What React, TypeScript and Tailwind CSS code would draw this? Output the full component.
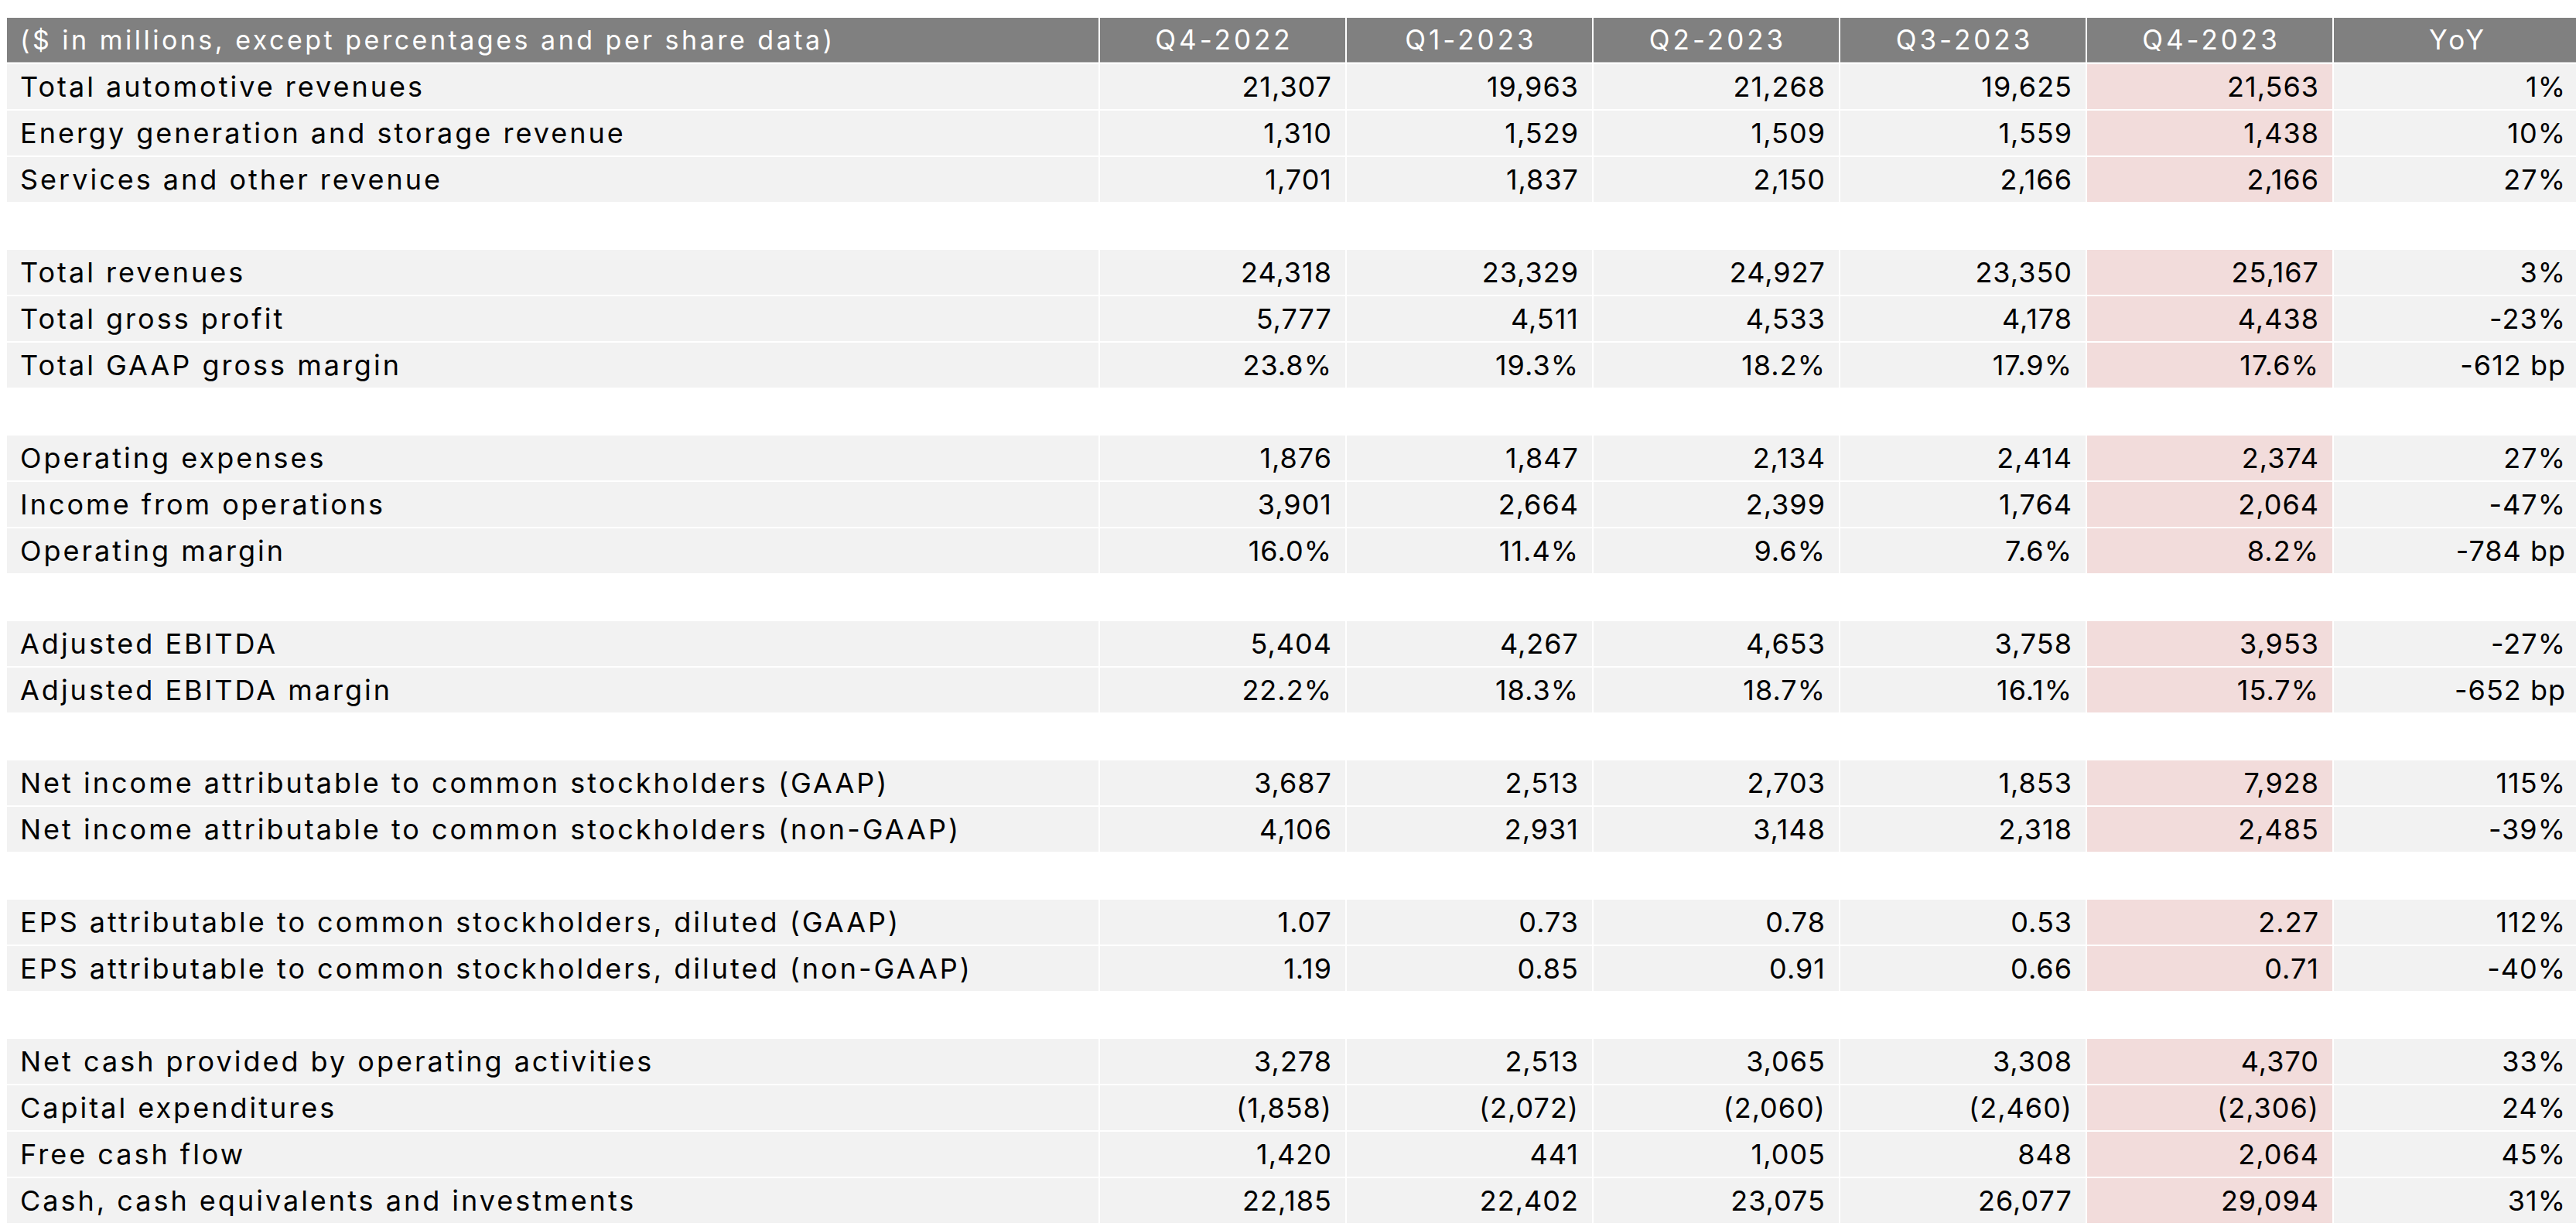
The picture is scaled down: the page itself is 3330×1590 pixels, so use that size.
const cols = ["Q4-2022", "Q1-2023", "Q2-2023", "Q3-2023", "Q4-2023", "YoY"];

type Row = [string, string[]];

const groups: Row[][] = [
  [
    ["Total automotive revenues", ["21,307", "19,963", "21,268", "19,625", "21,563", "1%"]],
    ["Energy generation and storage revenue", ["1,310", "1,529", "1,509", "1,559", "1,438", "10%"]],
    ["Services and other revenue", ["1,701", "1,837", "2,150", "2,166", "2,166", "27%"]],
  ],
  [
    ["Total revenues", ["24,318", "23,329", "24,927", "23,350", "25,167", "3%"]],
    ["Total gross profit", ["5,777", "4,511", "4,533", "4,178", "4,438", "-23%"]],
    ["Total GAAP gross margin", ["23.8%", "19.3%", "18.2%", "17.9%", "17.6%", "-612 bp"]],
  ],
  [
    ["Operating expenses", ["1,876", "1,847", "2,134", "2,414", "2,374", "27%"]],
    ["Income from operations", ["3,901", "2,664", "2,399", "1,764", "2,064", "-47%"]],
    ["Operating margin", ["16.0%", "11.4%", "9.6%", "7.6%", "8.2%", "-784 bp"]],
  ],
  [
    ["Adjusted EBITDA", ["5,404", "4,267", "4,653", "3,758", "3,953", "-27%"]],
    ["Adjusted EBITDA margin", ["22.2%", "18.3%", "18.7%", "16.1%", "15.7%", "-652 bp"]],
  ],
  [
    ["Net income attributable to common stockholders (GAAP)", ["3,687", "2,513", "2,703", "1,853", "7,928", "115%"]],
    ["Net income attributable to common stockholders (non-GAAP)", ["4,106", "2,931", "3,148", "2,318", "2,485", "-39%"]],
  ],
  [
    ["EPS attributable to common stockholders, diluted (GAAP)", ["1.07", "0.73", "0.78", "0.53", "2.27", "112%"]],
    ["EPS attributable to common stockholders, diluted (non-GAAP)", ["1.19", "0.85", "0.91", "0.66", "0.71", "-40%"]],
  ],
  [
    ["Net cash provided by operating activities", ["3,278", "2,513", "3,065", "3,308", "4,370", "33%"]],
    ["Capital expenditures", ["(1,858)", "(2,072)", "(2,060)", "(2,460)", "(2,306)", "24%"]],
    ["Free cash flow", ["1,420", "441", "1,005", "848", "2,064", "45%"]],
    ["Cash, cash equivalents and investments", ["22,185", "22,402", "23,075", "26,077", "29,094", "31%"]],
  ],
];

const font = { fontFamily: "Inter, 'Liberation Sans', sans-serif" };

export default function App() {
  return (
    <div className="w-[3330px] h-[1590px] overflow-hidden bg-white text-black" style={font}>
      {/* title line, mostly scrolled out of view */}
      <div className="h-[23px] overflow-hidden pl-[12px]">
        <div className="-mt-[40px] text-[36px] leading-[44px] font-bold tracking-[2px] text-[#222]">(Unaudited)</div>
      </div>
      <div className="ml-[9px] grid grid-cols-[1411px_repeat(6,317px)] gap-[2px] w-[3325px]">
        <div className="h-[58px] bg-[#808080] border-b border-[#c4c4c4] text-white text-[34px] tracking-[3.5px] flex items-center pl-[17px]">
          ($ in millions, except percentages and per share data)
        </div>
        {cols.map((c) => (
          <div
            key={c}
            className="h-[58px] bg-[#808080] border-b border-[#c4c4c4] text-white text-[35px] tracking-[4px] flex items-center justify-center pl-[4px]"
          >
            {c}
          </div>
        ))}

        {groups.map((g, gi) => (
          <>
            {gi > 0 && <div key={`blank-${gi}`} className="col-span-7 h-[58px]" />}
            {g.map(([label, vals]) => (
              <>
                <div key={label} className="h-[58px] bg-[#f2f2f2] text-[36px] tracking-[3px] flex items-center pl-[17px]">
                  {label}
                </div>
                {vals.map((v, i) => (
                  <div
                    key={label + i}
                    className={`h-[58px] text-[36px] tracking-[1px] flex items-center justify-end pr-[17px] ${
                      i === 4 ? "bg-[#f2dcdb]" : "bg-[#f2f2f2]"
                    }`}
                  >
                    {v}
                  </div>
                ))}
              </>
            ))}
          </>
        ))}
      </div>
    </div>
  );
}
